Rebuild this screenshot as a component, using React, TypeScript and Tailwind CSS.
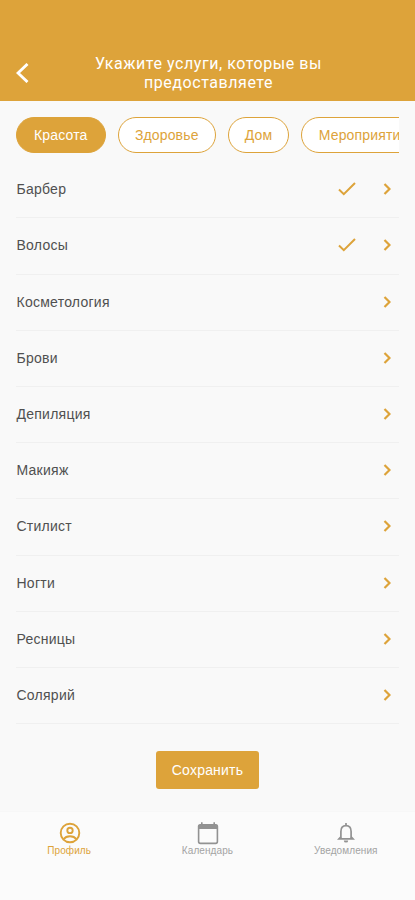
import clsx from 'clsx';

interface Category {
  label: string;
  width: string;
  active?: boolean;
}

interface Service {
  name: string;
  selected?: boolean;
}

const categories: Category[] = [
  { label: 'Красота', width: 'w-[89.5px]', active: true },
  { label: 'Здоровье', width: 'w-[98.5px]' },
  { label: 'Дом', width: 'w-[61px]' },
  { label: 'Мероприятия', width: 'w-[125px]' },
];

const services: Service[] = [
  { name: 'Барбер', selected: true },
  { name: 'Волосы', selected: true },
  { name: 'Косметология' },
  { name: 'Брови' },
  { name: 'Депиляция' },
  { name: 'Макияж' },
  { name: 'Стилист' },
  { name: 'Ногти' },
  { name: 'Ресницы' },
  { name: 'Солярий' },
];

function ProfileIcon() {
  return (
    <svg width="22" height="22" viewBox="0 0 22 22" fill="none" stroke="currentColor" strokeWidth="1.9">
      <circle cx="11" cy="11" r="9.3" />
      <circle cx="11" cy="8.4" r="2.7" />
      <path d="M4.6 17.2c1.4-2 3.500-3 6.400-3s5 1 6.400 3" />
    </svg>
  );
}

function CalendarIcon() {
  return (
    <svg width="22" height="24" viewBox="0 0 22 24" fill="none" stroke="currentColor" strokeWidth="1.6">
      <rect x="1.6" y="3.8" width="18.8" height="18.6" rx="1.8" />
      <path d="M1.6 3.8h18.8v4.200H1.600z" fill="currentColor" stroke="none" />
      <path d="M4.8 1.2v4M17.2 1.2v4" />
    </svg>
  );
}

function BellIcon() {
  return (
    <svg width="18" height="22" viewBox="0 0 18 22" fill="none" stroke="currentColor" strokeWidth="1.7">
      <path d="M3.9 16.600V9.500C3.900 6 5.900 3.700 9 3.700s5.100 2.300 5.100 5.800v7.100" />
      <path d="M3.9 14.800l-2 2.100h14.200l-2-2.100M9 1v3" />
      <path d="M6.800 18.400h4.400a2.200 2.200 0 0 1-4.400 0z" fill="currentColor" stroke="none" />
    </svg>
  );
}

const tabs = [
  { label: 'Профиль', icon: ProfileIcon, active: true },
  { label: 'Календарь', icon: CalendarIcon },
  { label: 'Уведомления', icon: BellIcon },
];

function ServiceRow({ name, selected }: Service) {
  return (
    <li className="flex h-[56.2px] items-center border-b border-[#f0f0f0] pr-2 pb-px pl-[0.5px] text-[#505050]">
      <span className="flex-1 text-[14px] leading-5 tracking-[0.25px]">{name}</span>
      {selected && (
        <svg className="mr-[27px] text-[#dda33a]" width="18" height="14" viewBox="0 0 18 14" fill="none" stroke="currentColor" strokeWidth="2">
          <path d="M1 7.500l4.800 4.700L17 1" />
        </svg>
      )}
      <svg className="text-[#dda33a]" width="8" height="12" viewBox="0 0 8 12" fill="none" stroke="currentColor" strokeWidth="2.2">
        <path d="M1.500 1l5 5-5 5" />
      </svg>
    </li>
  );
}

export default function App() {
  return (
    <div className="flex h-[900px] w-[415px] flex-col overflow-hidden bg-[#f9f9f9] font-['Liberation_Sans',sans-serif]">
      <header className="flex h-[101px] shrink-0 items-end bg-[#dda33a] pb-[9px] text-white">
        <button className="flex w-[46px] shrink-0 pb-[9px] pl-4" aria-label="Назад">
          <svg width="13" height="20" viewBox="0 0 13 20" fill="none" stroke="currentColor" strokeWidth="2.9">
            <path d="M11.500 1L2 10l9.500 9" />
          </svg>
        </button>
        <h1 className="flex-1 pr-[44px] text-center font-[Roboto,sans-serif] text-[16px] leading-[19px] tracking-[0.55px]">
          Укажите услуги, которые вы
          <br />
          предоставляете
        </h1>
      </header>

      <nav className="mx-4 mt-4 flex shrink-0 gap-3 overflow-hidden">
        {categories.map((category) => (
          <button
            key={category.label}
            className={clsx(
              'h-[36px] shrink-0 rounded-full border border-[#dda33a] pb-px text-[14px] leading-5 tracking-[0.15px]',
              category.width,
              category.active ? 'bg-[#dda33a] text-white' : 'bg-white text-[#dda33a]',
            )}
          >
            {category.label}
          </button>
        ))}
      </nav>

      <ul className="mx-4 mt-[9.2px] shrink-0">
        {services.map((service) => (
          <ServiceRow key={service.name} {...service} />
        ))}
      </ul>

      <button className="mx-auto mt-[27px] h-[38px] w-[103px] shrink-0 rounded-[3px] bg-[#dda33a] text-[14px] tracking-[0.2px] text-white">
        Сохранить
      </button>

      <footer className="mt-auto grid h-[89px] shrink-0 grid-cols-3 border-t border-[#f7f7f7] bg-[#fbfbfb]">
        {tabs.map(({ label, icon: Icon, active }) => (
          <div
            key={label}
            className={clsx('flex flex-col items-center pt-[9px]', active ? 'text-[#dda33a]' : 'text-[#929292]')}
          >
            <span className="flex h-[24px] items-center justify-center pl-px">
              <Icon />
            </span>
            <span className={clsx('text-[10px] leading-3 tracking-[0.1px]', !active && 'text-[#a3a3a3]')}>{label}</span>
          </div>
        ))}
      </footer>
    </div>
  );
}
